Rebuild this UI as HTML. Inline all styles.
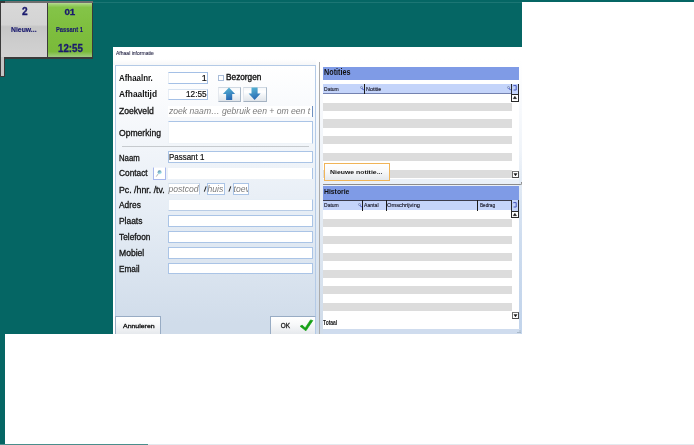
<!DOCTYPE html>
<html><head><meta charset="utf-8">
<style>
*{margin:0;padding:0;box-sizing:border-box}
html,body{width:694px;height:445px;overflow:hidden;background:#fff;position:relative;font-family:"Liberation Sans",sans-serif}
.a{position:absolute}
.t{position:absolute;white-space:nowrap;line-height:1;font-family:"Liberation Sans",sans-serif}
.fld{background:#fff;border:1px solid #aac4e6}
.btn{border:1px solid #a8b8c8;border-left-color:#e4e8ee;border-top-color:#cfd8e2;border-bottom-color:#a4b2c2;background:linear-gradient(#f6f8fa,#ffffff 30%,#eef1f4 65%,#e0e5ea)}
.sb{border:1px solid #4a4a4a;border-top-color:#7a7a7a;border-left-color:#6a6a6a;background:#fff}
.up{position:absolute;left:1.5px;top:1.5px;width:0;height:0;border-left:1.5px solid transparent;border-right:1.5px solid transparent;border-bottom:2px solid #111}
.dn{position:absolute;left:1.2px;top:2.4px;width:0;height:0;border-left:1.6px solid transparent;border-right:1.6px solid transparent;border-top:2.4px solid #111}
.ph{font-style:italic;color:#7c7c7c}
.row{position:absolute;left:323px;width:189px;background:#dcdcdc}
.hdr{position:absolute;left:323px;width:196px;background:#7f9be6}
.col{position:absolute;left:323px;width:196px;background:#c4d4fa}
.div{position:absolute;width:1px;background:#1a1a1a}
#w{position:absolute;left:0;top:0;width:694px;height:445px;filter:blur(0.3px)}
</style></head><body><div id="w">
<!-- teal desktop -->
<div class="a" style="left:0;top:0;width:522px;height:334px;background:#056664"></div>
<div class="a" style="left:0;top:0;width:694px;height:1.9px;background:#056664"></div><div class="a" style="left:93px;top:1.6px;width:429px;height:0.8px;background:#1c7674"></div>
<div class="a" style="left:0;top:334px;width:5px;height:111px;background:#056664"></div>
<div class="a" style="left:0;top:444px;width:148px;height:1px;background:#4a8e8c"></div><div class="a" style="left:148px;top:444px;width:546px;height:1px;background:#e4e9ee"></div>

<!-- tiles -->
<div class="a" style="left:0;top:1px;width:93.2px;height:57.5px;background:#3a3a3a"></div><div class="a" style="left:1px;top:1px;width:92px;height:1.5px;background:#6e6e6e"></div>
<div class="a" style="left:0;top:1px;width:4.5px;height:75.5px;background:#3a3a3a"></div>
<div class="a" style="left:1px;top:2.5px;width:3px;height:73px;background:#c4c4c4"></div>
<div class="a" style="left:1px;top:2.5px;width:45.5px;height:54px;background:linear-gradient(#d8d8d8,#d4d4d4 40%,#c6c6c6 44%,#cbcbcb 62%,#d2d2d2 100%)"></div>
<div class="a" style="left:47.6px;top:2.5px;width:44.6px;height:54px;background:linear-gradient(#b8dc98,#9ed070 3%,#84c448 8%,#7ebe3e 50%,#7aba3a 90%,#a0cc80)"></div>

<!-- dialog -->
<div class="a" style="left:113px;top:47px;width:409px;height:287px;background:#fff"></div>
<div class="a" style="left:113px;top:59px;width:409px;height:6px;background:linear-gradient(#fff,#f6f7f8)"></div>

<!-- left panel -->
<div class="a" style="left:115px;top:65px;width:201px;height:269px;border:1px solid #b4cae6;border-bottom:none;background:linear-gradient(#ffffff,#f7f9fc 18%,#e6edf5 55%,#d0dcea 96%)"></div>

<!-- fields -->
<div class="a" style="left:168px;top:72.3px;width:39.5px;height:11.5px;background:#fff;border:1px solid #a4c0e6;border-left-color:#e8eef6"></div>
<div class="a" style="left:168px;top:88.8px;width:39.5px;height:11.5px;background:#fff;border:1px solid #a4c0e6;border-left-color:#e8eef6;border-top-color:#d8e4f2"></div>

<div class="a" style="left:218px;top:75px;width:5.6px;height:5.6px;border:1px solid #a8bcd8;background:#fff"></div>

<div class="a btn" style="left:218px;top:87px;width:23px;height:14.5px"></div>
<div class="a btn" style="left:243px;top:87px;width:24px;height:14.5px"></div>
<svg class="a" style="left:222px;top:87px" width="14" height="14" viewBox="0 0 14 14"><defs><linearGradient id="ag" x1="0" y1="0" x2="0.3" y2="1"><stop offset="0" stop-color="#5cbcd8"/><stop offset="1" stop-color="#2a6cb4"/></linearGradient></defs><path d="M7 0.4 L13.1 7 L10.2 7 L10.2 13 L4.1 13 L4.1 7 L0.9 7 Z" fill="url(#ag)"/></svg>
<svg class="a" style="left:248px;top:87px" width="14" height="14" viewBox="0 0 14 14"><path d="M3.5 0.4 L9.6 0.4 L9.6 6.4 L12.6 6.4 L6.6 13 L0.6 6.4 L3.5 6.4 Z" fill="url(#ag)"/></svg>

<div class="a" style="left:168px;top:105.5px;width:145px;height:11.5px;background:#fff"></div>
<div class="a" style="left:312px;top:106px;width:1px;height:11px;background:#6f90c0"></div>
<div class="a" style="left:168px;top:104px;width:144px;height:14px;overflow:hidden"><div class="t ph" style="left:1px;top:3.1px;font-size:8.6px">zoek naam… gebruik een + om een t</div></div>

<div class="a" style="left:167.5px;top:121px;width:145.5px;height:23px;background:#fff;border:1px solid #aac4e6;border-bottom-color:#eef3f8;border-left-color:#eef3f8"></div>

<div class="a" style="left:122px;top:146px;width:187px;height:1px;background:#c6cace"></div>

<div class="a fld" style="left:167.5px;top:151px;width:145px;height:12.4px"></div>

<div class="a" style="left:152.6px;top:167px;width:13.2px;height:12.6px;border:1.2px solid #a8b8ec;border-top-color:#f4f6fc;background:#fff"></div>
<svg class="a" style="left:152px;top:167px" width="14" height="13" viewBox="0 0 14 13"><defs><linearGradient id="lg" x1="0" y1="0" x2="0.4" y2="1"><stop offset="0" stop-color="#4a7a98"/><stop offset="1" stop-color="#b0eaf4"/></linearGradient></defs><path d="M6.4 6.6 L4.5 9.3" stroke="#a0a0a0" stroke-width="0.8" stroke-linecap="round"/><circle cx="7.6" cy="5.2" r="2" fill="url(#lg)"/></svg>
<div class="a" style="left:167.5px;top:167.5px;width:145px;height:11.5px;background:#fff;border-right:1px solid #aac4e6"></div>

<div class="a" style="left:167.5px;top:183px;width:32px;height:12px;background:#fff;border:1px solid #e2eaf4;border-top-color:#d0dcea;border-right-color:#b8cce6"></div>
<div class="a" style="left:168px;top:183px;width:31px;height:12px;overflow:hidden"><div class="t ph" style="left:0.5px;top:2.4px;font-size:8.6px">postcode</div></div>
<div class="a fld" style="left:207px;top:183px;width:18px;height:12px"></div>
<div class="a" style="left:207px;top:183px;width:17px;height:12px;overflow:hidden"><div class="t ph" style="left:0.5px;top:2.4px;font-size:8.6px">huis</div></div>
<div class="a fld" style="left:233px;top:183px;width:15.5px;height:12px"></div>
<div class="a" style="left:233px;top:183px;width:14.5px;height:12px;overflow:hidden"><div class="t ph" style="left:0.5px;top:2.4px;font-size:8.6px">toev</div></div>
<svg class="a" style="left:200px;top:184px" width="34" height="10" viewBox="0 0 34 10"><path d="M4.3 7.6 L6.2 2.4 M28.9 7.6 L30.8 2.4" stroke="#2a2a2a" stroke-width="1.05"/></svg>

<div class="a" style="left:167.5px;top:199px;width:145px;height:12.4px;background:#fff;border:1px solid #e6eef6;border-bottom-color:#b8cce6;border-right-color:#aac4e6"></div>
<div class="a fld" style="left:167.5px;top:214.5px;width:145px;height:12.1px"></div>
<div class="a fld" style="left:167.5px;top:230.8px;width:145px;height:12.1px"></div>
<div class="a fld" style="left:167.5px;top:246.5px;width:145px;height:12px"></div>
<div class="a fld" style="left:167.5px;top:262.7px;width:145px;height:11.8px"></div>

<!-- bottom buttons -->
<div class="a" style="left:115.4px;top:316.3px;width:45.4px;height:18px;border:1px solid #98acc4;border-bottom:none;background:linear-gradient(#ffffff,#f8f9fa 40%,#e6e9ed)"></div>
<div class="a" style="left:269.8px;top:316.2px;width:46.2px;height:18px;border:1px solid #98acc4;border-bottom:none;border-right-color:#b4cae6;background:linear-gradient(#ffffff,#f8f9fa 40%,#e6e9ed)"></div>
<svg class="a" style="left:296px;top:316px" width="20" height="18" viewBox="0 0 20 18"><path d="M4.1 10.3 L6.1 9.1 L9.2 11.9 L14.5 3.9 L16.8 4.6 L9.9 14.8 Z" fill="#16a016" stroke="#16a016" stroke-width="0.7" stroke-linejoin="round"/></svg>

<!-- separator -->
<div class="a" style="left:316px;top:59px;width:206px;height:275px;background:linear-gradient(#ffffff,#f7f9fc 18%,#e6edf5 55%,#d0dcea 96%)"></div>
<div class="a" style="left:319px;top:62px;width:1px;height:272px;background:#ababab"></div>
<!-- right panel -->
<div class="a" style="left:322.5px;top:62px;width:196.7px;height:18px;background:#fff"></div>
<div class="a" style="left:322.5px;top:80px;width:196.7px;height:98.8px;background:#fff"></div>
<div class="a" style="left:322.5px;top:199px;width:196.7px;height:129.8px;background:#fff"></div>
<div class="a" style="left:519.2px;top:150px;width:2.8px;height:184px;background:linear-gradient(rgba(190,210,236,0),rgba(190,210,236,0.55) 50%,rgba(190,210,236,0.75))"></div>
<div class="a" style="left:322.5px;top:329px;width:197px;height:5px;background:#cfdcee"></div>
<div class="a" style="left:516px;top:326px;width:6px;height:8px;background:radial-gradient(circle at 4px 5px,#a8b8c8 0.6px,transparent 0.8px),radial-gradient(circle at 2px 6.5px,#a8b8c8 0.6px,transparent 0.8px),radial-gradient(circle at 4px 6.5px,#a8b8c8 0.6px,transparent 0.8px)"></div>

<!-- Notities -->
<div class="hdr" style="top:67px;height:13px"></div>
<div class="col" style="top:83.8px;height:10px;border-bottom:1.2px solid #7482b0"></div>
<div class="div" style="left:364px;top:84px;height:10px"></div>
<svg class="a" style="left:360px;top:86.3px" width="4" height="5" viewBox="0 0 4 5"><circle cx="1.5" cy="1.5" r="1" fill="none" stroke="#7080a8" stroke-width="0.7"/><path d="M2.2 2.4 L3.6 4.2" stroke="#2030c0" stroke-width="1"/></svg>
<svg class="a" style="left:507px;top:86.3px" width="4" height="5" viewBox="0 0 4 5"><circle cx="1.5" cy="1.5" r="1" fill="none" stroke="#7080a8" stroke-width="0.7"/><path d="M2.2 2.4 L3.6 4.2" stroke="#2030c0" stroke-width="1"/></svg>
<div class="a" style="left:511.8px;top:83.8px;width:6.5px;height:10.5px;background:#c4d4fa"></div>
<div class="a" style="left:511.8px;top:94.3px;width:6.5px;height:6.5px;background:#fff"></div>
<div class="a" style="left:511.3px;top:83.6px;width:1px;height:17.8px;background:#2a2a2a"></div>
<div class="a" style="left:518.0px;top:83.6px;width:1px;height:17.8px;background:#2a2a2a"></div>
<div class="a" style="left:511.3px;top:93.9px;width:7.7px;height:1px;background:#2a2a2a"></div>
<div class="a" style="left:511.3px;top:100.6px;width:7.7px;height:1px;background:#2a2a2a"></div>
<svg class="a" style="left:512px;top:84px" width="6" height="9" viewBox="0 0 6 9"><path d="M1.2 2.2 L1.6 1.6 L4.2 1.6 L4.2 6 L1.6 6" fill="none" stroke="#3848b8" stroke-width="0.9"/></svg>
<svg class="a" style="left:511px;top:94px" width="8" height="8" viewBox="0 0 8 8"><path d="M2.2 4.7 L5.6 4.7 L3.9 2.2 Z" fill="#111" stroke="#111" stroke-width="0.4"/></svg>
<div class="row" style="top:102.5px;height:8.3px"></div>
<div class="row" style="top:119.3px;height:8.3px"></div>
<div class="row" style="top:136.1px;height:8.3px"></div>
<div class="row" style="top:152.9px;height:8.3px"></div>
<div class="row" style="top:169.7px;height:8.3px"></div>
<div class="a sb" style="left:511.5px;top:171px;width:7px;height:7px"></div><svg class="a" style="left:511.5px;top:171px" width="7" height="7" viewBox="0 0 7 7"><path d="M1.9 2.6 L5.1 2.6 L3.5 4.9 Z" fill="#111" stroke="#111" stroke-width="0.4"/></svg>
<div class="a" style="left:323.6px;top:162.5px;width:66.4px;height:18.1px;border:1px solid #f0b458;background:linear-gradient(#ffffff,#f8f9fa 45%,#e4e8ec)"></div>
<div class="a" style="left:323px;top:183.8px;width:197px;height:1px;background:#8c8c8c"></div><div class="a" style="left:519.5px;top:181.5px;width:2px;height:3.3px;border-right:1px solid #8c8c8c;border-bottom:1px solid #8c8c8c;border-bottom-right-radius:2px"></div>

<!-- Historie -->
<div class="hdr" style="top:186.3px;height:13.3px"></div>
<div class="col" style="top:199.8px;height:10.6px;border-top:1px solid #3c3c4c"></div>
<svg class="a" style="left:357.5px;top:203px" width="4" height="5" viewBox="0 0 4 5"><circle cx="1.5" cy="1.5" r="1" fill="none" stroke="#7080a8" stroke-width="0.7"/><path d="M2.2 2.4 L3.6 4.2" stroke="#2030c0" stroke-width="1"/></svg>
<div class="div" style="left:362px;top:200px;height:10.6px"></div>
<div class="div" style="left:386px;top:200px;height:10.6px"></div>
<div class="div" style="left:477px;top:200px;height:10.6px"></div>
<div class="a" style="left:511.8px;top:200.4px;width:6.5px;height:10.6px;background:#c4d4fa"></div>
<div class="a" style="left:511.8px;top:211px;width:6.5px;height:6.5px;background:#fff"></div>
<div class="a" style="left:511.3px;top:200.2px;width:1px;height:17.8px;background:#2a2a2a"></div>
<div class="a" style="left:518.0px;top:200.2px;width:1px;height:17.8px;background:#2a2a2a"></div>
<div class="a" style="left:511.3px;top:210.6px;width:7.7px;height:1px;background:#2a2a2a"></div>
<div class="a" style="left:511.3px;top:217.2px;width:7.7px;height:1px;background:#2a2a2a"></div>
<svg class="a" style="left:512px;top:200.6px" width="6" height="9" viewBox="0 0 6 9"><path d="M1.2 2.2 L1.6 1.6 L4.2 1.6 L4.2 6 L1.6 6" fill="none" stroke="#3848b8" stroke-width="0.9"/></svg>
<svg class="a" style="left:511px;top:210.7px" width="8" height="8" viewBox="0 0 8 8"><path d="M2.2 4.7 L5.6 4.7 L3.9 2.2 Z" fill="#111" stroke="#111" stroke-width="0.4"/></svg>
<div class="row" style="top:219.2px;height:8.1px"></div>
<div class="row" style="top:236.0px;height:8.1px"></div>
<div class="row" style="top:252.7px;height:8.1px"></div>
<div class="row" style="top:269.5px;height:8.1px"></div>
<div class="row" style="top:286.3px;height:8.1px"></div>
<div class="row" style="top:303.0px;height:8.1px"></div>
<div class="a sb" style="left:511.8px;top:311.7px;width:7px;height:7px"></div><svg class="a" style="left:511.8px;top:311.7px" width="7" height="7" viewBox="0 0 7 7"><path d="M1.9 2.6 L5.1 2.6 L3.5 4.9 Z" fill="#111" stroke="#111" stroke-width="0.4"/></svg>

<div class="t" style="left:21.90px;top:6.59px;font-size:10.17px;font-weight:bold;font-style:normal;color:#1a1a6e;-webkit-text-stroke:0.3px #1a1a6e">2</div>
<div class="t" style="left:11.00px;top:26.62px;font-size:6.83px;font-weight:bold;font-style:normal;color:#1a1a6e;-webkit-text-stroke:0.15px #1a1a6e">Nieuw...</div>
<div class="t" style="left:64.45px;top:6.75px;font-size:9.74px;font-weight:bold;font-style:normal;color:#1a1a6e;-webkit-text-stroke:0.3px #1a1a6e">01</div>
<div class="t" style="left:56.00px;top:26.62px;font-size:6.83px;font-weight:bold;font-style:normal;color:#1a1a6e;transform:scaleX(0.848);transform-origin:0 0;-webkit-text-stroke:0.15px #1a1a6e">Passant 1</div>
<div class="t" style="left:57.60px;top:43.59px;font-size:10.17px;font-weight:bold;font-style:normal;color:#1a1a6e;transform:scaleX(0.957);transform-origin:0 0;-webkit-text-stroke:0.3px #1a1a6e">12:55</div>
<div class="t" style="left:116.20px;top:50.52px;font-size:5.52px;font-weight:normal;font-style:normal;color:#2a2a4a;transform:scaleX(0.912);transform-origin:0 0;-webkit-text-stroke:0.1px #2a2a4a">Afhaal informatie</div>
<div class="t" style="left:119.00px;top:74.49px;font-size:8.87px;font-weight:bold;font-style:normal;color:#111;transform:scaleX(0.892);transform-origin:0 0;">Afhaalnr.</div>
<div class="t" style="left:119.00px;top:90.29px;font-size:8.87px;font-weight:bold;font-style:normal;color:#111;transform:scaleX(0.941);transform-origin:0 0;">Afhaaltijd</div>
<div class="t" style="left:119.00px;top:107.24px;font-size:8.58px;font-weight:normal;font-style:normal;color:#141414;-webkit-text-stroke:0.3px #141414">Zoekveld</div>
<div class="t" style="left:119.00px;top:129.14px;font-size:8.58px;font-weight:normal;font-style:normal;color:#141414;-webkit-text-stroke:0.3px #141414">Opmerking</div>
<div class="t" style="left:119.00px;top:153.94px;font-size:8.58px;font-weight:normal;font-style:normal;color:#141414;transform:scaleX(0.903);transform-origin:0 0;-webkit-text-stroke:0.3px #141414">Naam</div>
<div class="t" style="left:119.00px;top:169.34px;font-size:8.58px;font-weight:normal;font-style:normal;color:#141414;transform:scaleX(0.969);transform-origin:0 0;-webkit-text-stroke:0.3px #141414">Contact</div>
<div class="t" style="left:119.00px;top:185.54px;font-size:8.58px;font-weight:normal;font-style:normal;color:#141414;transform:scaleX(1.023);transform-origin:0 0;-webkit-text-stroke:0.3px #141414">Pc. /hnr. /tv.</div>
<div class="t" style="left:119.00px;top:201.14px;font-size:8.58px;font-weight:normal;font-style:normal;color:#141414;transform:scaleX(0.978);transform-origin:0 0;-webkit-text-stroke:0.3px #141414">Adres</div>
<div class="t" style="left:119.00px;top:217.04px;font-size:8.58px;font-weight:normal;font-style:normal;color:#141414;transform:scaleX(0.982);transform-origin:0 0;-webkit-text-stroke:0.3px #141414">Plaats</div>
<div class="t" style="left:119.00px;top:233.04px;font-size:8.58px;font-weight:normal;font-style:normal;color:#141414;transform:scaleX(0.969);transform-origin:0 0;-webkit-text-stroke:0.3px #141414">Telefoon</div>
<div class="t" style="left:119.00px;top:248.94px;font-size:8.58px;font-weight:normal;font-style:normal;color:#141414;-webkit-text-stroke:0.3px #141414">Mobiel</div>
<div class="t" style="left:119.00px;top:264.94px;font-size:8.58px;font-weight:normal;font-style:normal;color:#141414;transform:scaleX(0.958);transform-origin:0 0;-webkit-text-stroke:0.3px #141414">Email</div>
<div class="t" style="left:201.80px;top:74.37px;font-size:9.01px;font-weight:normal;font-style:normal;color:#111;-webkit-text-stroke:0.2px #111">1</div>
<div class="t" style="left:185.50px;top:90.29px;font-size:8.87px;font-weight:normal;font-style:normal;color:#111;transform:scaleX(0.926);transform-origin:0 0;-webkit-text-stroke:0.2px #111">12:55</div>
<div class="t" style="left:226.30px;top:73.04px;font-size:8.58px;font-weight:normal;font-style:normal;color:#111;transform:scaleX(0.965);transform-origin:0 0;-webkit-text-stroke:0.35px #111">Bezorgen</div>
<div class="t" style="left:168.50px;top:153.12px;font-size:8.72px;font-weight:normal;font-style:normal;color:#111;transform:scaleX(0.912);transform-origin:0 0;-webkit-text-stroke:0.2px #111">Passant 1</div>
<div class="t" style="left:122.60px;top:323.13px;font-size:6.10px;font-weight:normal;font-style:normal;color:#111;transform:scaleX(1.139);transform-origin:0 0;-webkit-text-stroke:0.3px #111">Annuleren</div>
<div class="t" style="left:280.67px;top:322.59px;font-size:6.40px;font-weight:normal;font-style:normal;color:#222;-webkit-text-stroke:0.3px #222">OK</div>
<div class="t" style="left:324.00px;top:68.16px;font-size:8.43px;font-weight:bold;font-style:normal;color:#111;transform:scaleX(0.859);transform-origin:0 0;">Notities</div>
<div class="t" style="left:324.00px;top:86.55px;font-size:5.96px;font-weight:normal;font-style:normal;color:#1a1a2a;transform:scaleX(0.844);transform-origin:0 0;-webkit-text-stroke:0.15px #1a1a2a">Datum</div>
<div class="t" style="left:365.60px;top:86.55px;font-size:5.96px;font-weight:normal;font-style:normal;color:#1a1a2a;transform:scaleX(0.907);transform-origin:0 0;-webkit-text-stroke:0.15px #1a1a2a">Notitie</div>
<div class="t" style="left:330.20px;top:168.73px;font-size:6.10px;font-weight:bold;font-style:normal;color:#111;transform:scaleX(1.129);transform-origin:0 0;">Nieuwe notitie...</div>
<div class="t" style="left:324.00px;top:187.75px;font-size:7.85px;font-weight:bold;font-style:normal;color:#111;transform:scaleX(0.869);transform-origin:0 0;">Historie</div>
<div class="t" style="left:323.80px;top:202.95px;font-size:5.96px;font-weight:normal;font-style:normal;color:#1a1a2a;transform:scaleX(0.844);transform-origin:0 0;-webkit-text-stroke:0.15px #1a1a2a">Datum</div>
<div class="t" style="left:363.60px;top:202.95px;font-size:5.96px;font-weight:normal;font-style:normal;color:#1a1a2a;transform:scaleX(0.860);transform-origin:0 0;-webkit-text-stroke:0.15px #1a1a2a">Aantal</div>
<div class="t" style="left:387.00px;top:203.15px;font-size:5.96px;font-weight:normal;font-style:normal;color:#1a1a2a;transform:scaleX(0.959);transform-origin:0 0;-webkit-text-stroke:0.15px #1a1a2a">Omschrijving</div>
<div class="t" style="left:480.00px;top:203.15px;font-size:5.96px;font-weight:normal;font-style:normal;color:#1a1a2a;transform:scaleX(0.785);transform-origin:0 0;-webkit-text-stroke:0.15px #1a1a2a">Bedrag</div>
<div class="t" style="left:323.40px;top:319.99px;font-size:6.40px;font-weight:bold;font-style:normal;color:#111;transform:scaleX(0.777);transform-origin:0 0;">Totaal</div>
</div></body></html>
